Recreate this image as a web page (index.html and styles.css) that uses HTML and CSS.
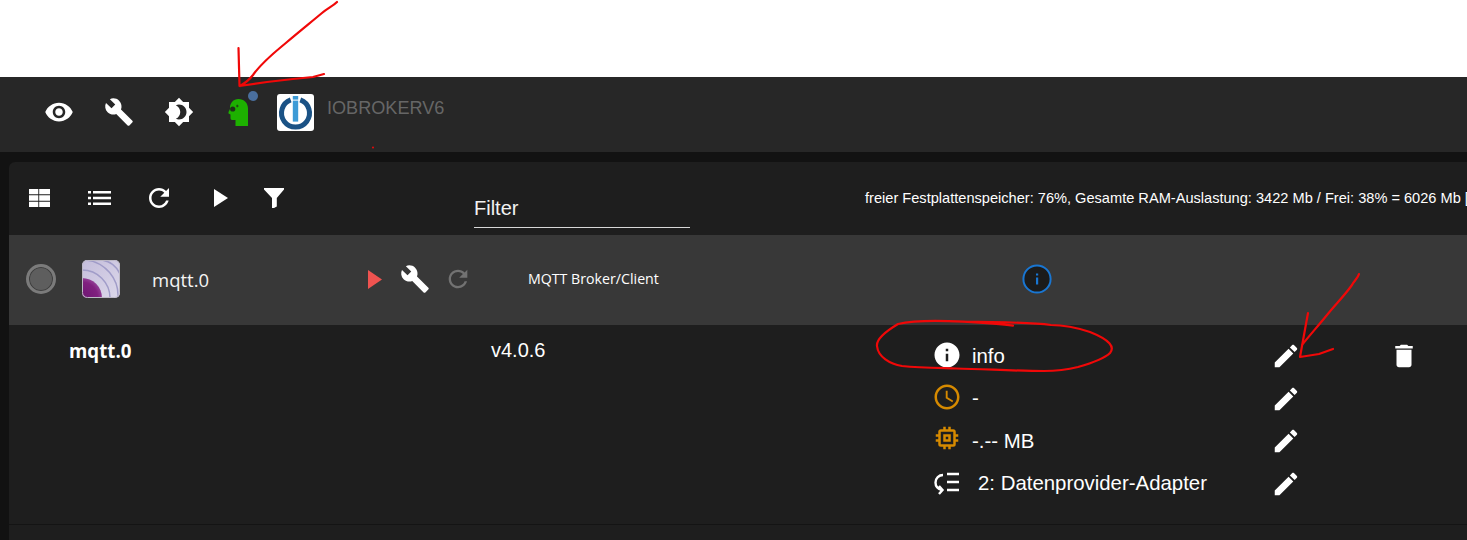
FILE: index.html
```html
<!DOCTYPE html>
<html lang="de">
<head>
<meta charset="utf-8">
<title>ioBroker Instanzen</title>
<link rel="stylesheet" href="styles.css">
</head>
<body>
<div class="blank"></div>
<header class="appbar">
  <span class="app-btn"><svg class="i30" viewBox="0 0 24 24"><path d="M12 4.5C7 4.5 2.73 7.61 1 12c1.73 4.39 6 7.5 11 7.5s9.27-3.11 11-7.5c-1.73-4.39-6-7.5-11-7.5zM12 17c-2.76 0-5-2.24-5-5s2.24-5 5-5 5 2.24 5 5-2.24 5-5 5zm0-8c-1.66 0-3 1.34-3 3s1.34 3 3 3 3-1.34 3-3-1.34-3-3-3z"/></svg></span>
  <span class="app-btn"><svg class="i30" viewBox="0 0 24 24"><path d="M22.7 19l-9.1-9.1c.9-2.3.4-5-1.5-6.9-2-2-5-2.4-7.4-1.3L9 6 6 9 1.6 4.7C.4 7.1.9 10.1 2.9 12.1c1.9 1.9 4.6 2.4 6.9 1.5l9.1 9.1c.4.4 1 .4 1.4 0l2.3-2.3c.5-.4.5-1.1.1-1.4z"/></svg></span>
  <span class="app-btn"><svg class="i30" viewBox="0 0 24 24"><path d="M20 8.69V4h-4.69L12 .69 8.69 4H4v4.69L.69 12 4 15.31V20h4.69L12 23.31 15.31 20H20v-4.69L23.31 12 20 8.69zM12 18c-.89 0-1.74-.2-2.5-.55C11.56 16.5 13 14.42 13 12s-1.44-4.5-3.5-5.45C10.26 6.2 11.11 6 12 6c3.31 0 6 2.69 6 6s-2.69 6-6 6z"/></svg></span>
  <span class="app-btn head-btn">
    <svg class="head" viewBox="0 0 20 27"><path class="head-fill" d="M10.500 0C16 0 20 4 20 9.500V27H7.500V21H4C3 21 2.500 20 2.500 19V15.500L.5 14.500V13L2 10C1.500 4 5.500 0 10.500 0Z"/><circle class="head-eye" cx="4.700" cy="10" r="2.600"/><path class="head-eye-line" d="M8 7h2.600M9.300 5.700v2.600"/></svg>
    <span class="badge"></span>
  </span>
  <svg class="logo" viewBox="0 0 37 37"><rect width="37" height="37" rx="3" fill="#fff"/><path d="M13.700 5.900A14 14 0 1 0 23.300 5.900" fill="none" stroke="#1a5285" stroke-width="5"/><rect x="15.800" y="2" width="5.400" height="3.600" fill="#3d9bd6"/><rect x="15.800" y="6.600" width="5.400" height="21" fill="#3d9bd6"/></svg>
  <span class="host">IOBROKERV6</span>
</header>
<main class="content">
  <section class="card">
    <div class="toolbar">
      <span class="tool"><svg class="table-icon" viewBox="0 0 21 18"><path d="M0 0h9.300v5.300H0zM10.200 0H21v5.300H10.200zM0 6.300h9.300v5.400H0zM10.200 6.300H21v5.400H10.200zM0 12.700h9.300V18H0zM10.200 12.700H21V18H10.200z"/></svg></span>
      <span class="tool"><svg class="list-icon" viewBox="0 0 23 14"><path d="M0 0h3v2.600H0zM5 0h18v2.600H5zM0 5.700h3v2.600H0zM5 5.700h18v2.600H5zM0 11.400h3V14H0zM5 11.400h18V14H5z"/></svg></span>
      <span class="tool"><svg class="i30" viewBox="0 0 24 24"><path d="M17.65 6.35C16.2 4.9 14.21 4 12 4c-4.42 0-7.99 3.58-7.99 8s3.57 8 7.99 8c3.73 0 6.84-2.55 7.73-6h-2.08c-.82 2.33-3.04 4-5.65 4-3.31 0-6-2.69-6-6s2.69-6 6-6c1.66 0 3.14.69 4.22 1.78L13 11h7V4l-2.35 2.35z"/></svg></span>
      <span class="tool tool-play"><svg class="play" viewBox="0 0 14 18"><path d="M0 0L14 9L0 18Z"/></svg></span>
      <span class="tool tool-narrow"><svg class="funnel" viewBox="0 0 20 20"><path d="M0 0H20V1.500L12.800 10V18.500L10 20H8V10L0 1.500Z"/></svg></span>
      <label class="filter">Filter</label>
      <span class="status">freier Festplattenspeicher: 76%, Gesamte RAM-Auslastung: 3422 Mb / Frei: 38% = 6026 Mb [</span>
    </div>
    <div class="instance">
      <span class="state"></span>
      <svg class="adapter" viewBox="0 0 38 38">
        <defs>
          <linearGradient id="bg" x1="0" y1="0" x2="1" y2="1"><stop offset="0" stop-color="#c4bddb"/><stop offset="1" stop-color="#dcd8ea"/></linearGradient>
          <radialGradient id="core" gradientUnits="userSpaceOnUse" cx="0" cy="38" r="21"><stop offset="0" stop-color="#6d1672"/><stop offset=".75" stop-color="#80207f"/><stop offset="1" stop-color="#96459a"/></radialGradient>
          <clipPath id="round"><rect width="38" height="38" rx="5"/></clipPath>
        </defs>
        <g clip-path="url(#round)">
          <rect width="38" height="38" fill="url(#bg)"/>
          <path d="M0 18A20 20 0 0 1 20 38H0Z" fill="url(#core)"/>
          <g fill="none" stroke="#a09cc8" stroke-width="1.500">
            <path d="M0 10A28 28 0 0 1 28 38"/>
            <path d="M4 0A36 36 0 0 1 36 38"/>
            <path d="M20 0A24 24 0 0 1 38 14"/>
          </g>
        </g>
        <rect x=".5" y=".5" width="37" height="37" rx="5" fill="none" stroke="#bdb9c6"/>
      </svg>
      <span class="name">mqtt.0</span>
      <svg class="run" viewBox="0 0 14 19"><path d="M0 0L14 9.500L0 19Z"/></svg>
      <svg class="i30 row-wrench" viewBox="0 0 24 24"><path d="M22.7 19l-9.1-9.1c.9-2.3.4-5-1.5-6.9-2-2-5-2.4-7.4-1.3L9 6 6 9 1.6 4.7C.4 7.1.9 10.1 2.9 12.1c1.9 1.9 4.6 2.4 6.9 1.5l9.1 9.1c.4.4 1 .4 1.4 0l2.3-2.3c.5-.4.5-1.1.1-1.4z"/></svg>
      <svg class="row-refresh" viewBox="0 0 24 24"><path d="M17.65 6.35C16.2 4.9 14.21 4 12 4c-4.42 0-7.99 3.58-7.99 8s3.57 8 7.99 8c3.73 0 6.84-2.55 7.73-6h-2.08c-.82 2.33-3.04 4-5.65 4-3.31 0-6-2.69-6-6s2.69-6 6-6c1.66 0 3.14.69 4.22 1.78L13 11h7V4l-2.35 2.35z"/></svg>
      <span class="title">MQTT Broker/Client</span>
      <svg class="row-info" viewBox="0 0 30 30"><circle cx="15" cy="15" r="13.600" fill="#1b1b1b" stroke="#1976d2" stroke-width="2"/><path d="M14 13.500h2.200v7H14zM14 9.500h2.200v2H14z" fill="#1976d2"/></svg>
    </div>
    <div class="details">
      <strong class="d-name">mqtt.0</strong>
      <span class="d-version">v4.0.6</span>
      <div class="props">
        <div class="prop">
          <svg class="i30 up-1" viewBox="0 0 24 24"><path d="M12 2C6.480 2 2 6.480 2 12s4.480 10 10 10 10-4.480 10-10S17.520 2 12 2zm1 15h-2v-6h2v6zm0-8h-2V7h2v2z"/></svg>
          <span class="p-text">info</span>
          <svg class="i30 edit" viewBox="0 0 24 24"><path d="M3 17.250V21h3.750L17.810 9.940l-3.750-3.750L3 17.250zM20.710 7.040c.39-.39.39-1.020 0-1.410l-2.340-2.340c-.39-.39-1.020-.39-1.410 0l-1.830 1.830 3.750 3.750 1.830-1.830z"/></svg>
        </div>
        <div class="prop">
          <svg class="i30 orange up-2" viewBox="0 0 24 24"><path d="M11.990 2C6.470 2 2 6.480 2 12s4.470 10 9.990 10C17.520 22 22 17.520 22 12S17.520 2 11.990 2zM12 20c-4.420 0-8-3.580-8-8s3.580-8 8-8 8 3.580 8 8-3.580 8-8 8zm.5-13H11v6l5.250 3.150.75-1.230-4.500-2.670z"/></svg>
          <span class="p-text">-</span>
          <svg class="i30 edit" viewBox="0 0 24 24"><path d="M3 17.250V21h3.750L17.810 9.940l-3.750-3.750L3 17.250zM20.710 7.040c.39-.39.39-1.020 0-1.410l-2.340-2.340c-.39-.39-1.020-.39-1.410 0l-1.830 1.830 3.750 3.750 1.830-1.830z"/></svg>
        </div>
        <div class="prop">
          <svg class="i30 orange up-3" viewBox="0 0 24 24"><path d="M17 17H7V7h10m4 4V9h-2V7a2 2 0 0 0-2-2h-2V3h-2v2h-2V3H9v2H7c-1.110 0-2 .89-2 2v2H3v2h2v2H3v2h2v2a2 2 0 0 0 2 2h2v2h2v-2h2v2h2v-2h2a2 2 0 0 0 2-2v-2h2v-2h-2v-2m-6 2h-2v-2h2m2-2H9v6h6V9z"/></svg>
          <span class="p-text">-.-- MB</span>
          <svg class="i30 edit" viewBox="0 0 24 24"><path d="M3 17.250V21h3.750L17.810 9.940l-3.750-3.750L3 17.250zM20.710 7.040c.39-.39.39-1.020 0-1.410l-2.340-2.340c-.39-.39-1.020-.39-1.410 0l-1.830 1.830 3.750 3.750 1.830-1.830z"/></svg>
        </div>
        <div class="prop">
          <svg class="i30 outline up-1" viewBox="0 0 30 30"><path d="M11 7C7 7 3.500 10 3.500 14.500C3.500 18 6 21 10 22M7 18L10.500 22L7 26"/><path d="M15 6H27M15 14H27M15 22H27"/></svg>
          <span class="p-text p-wide">2: Datenprovider-Adapter</span>
          <svg class="i30 edit" viewBox="0 0 24 24"><path d="M3 17.250V21h3.750L17.810 9.940l-3.750-3.750L3 17.250zM20.710 7.040c.39-.39.39-1.020 0-1.410l-2.340-2.340c-.39-.39-1.020-.39-1.410 0l-1.830 1.830 3.750 3.750 1.830-1.830z"/></svg>
        </div>
      </div>
      <svg class="i30 trash" viewBox="0 0 24 24"><path d="M6 19c0 1.100.9 2 2 2h8c1.100 0 2-.9 2-2V7H6v12zM19 4h-3.500l-1-1h-5l-1 1H5v2h14V4z"/></svg>
    </div>
    <div class="rest"></div>
  </section>
</main>
<svg class="ink" viewBox="0 0 1467 540">
  <path d="M337 2C333 6 328 8 322 13C310 23 300 31 287 42C275 52 262 62 253 75C250 79 245 83 240 86M238.500 48L239.500 86L267 82L293 79L313 77L324 74"/>
  <path d="M1013 325.700C1000 324 985 323 963 321.700C940 320.500 915 320 898 324C888 330 876 338 877 346C878 357 890 364 902 366C920 368 940 368 956 368.500C985 369 1015 371 1044 371C1060 371 1070 369 1078 367C1092 363 1105 358 1110 353C1115 347 1110 340 1090 332C1075 327 1060 325 1051 325C1035 323 1010 322 963 321.700"/>
  <path d="M1359 274C1358 278 1354 281 1352 285C1345 295 1335 305 1327 315C1318 326 1310 335 1302 345M1308 313L1300 357L1319 354L1333 349"/>
  <circle class="ink-dot" cx="373" cy="147.500" r="1"/>
</svg>
</body>
</html>
```
FILE: styles.css
```css
* { box-sizing: border-box; }
html, body { margin: 0; height: 540px; overflow: hidden; }
body { background: #121212; color: #fff; font-family: "Liberation Sans", Arial, sans-serif; position: relative; }
svg { display: block; flex: none; fill: #fff; }
.blank { height: 77px; background: #fff; }
.appbar { height: 75px; background: #272727; display: flex; align-items: center; padding: 0 0 5px 29px; }
.app-btn { width: 60px; height: 40px; display: flex; align-items: center; justify-content: center; position: relative; flex: none; }
.i30 { width: 30px; height: 30px; }
.head-btn { width: 58px; }
.head { width: 20px; height: 27px; }
.head-fill { fill: #1db100; }
.head-eye { fill: #1e3018; }
.head-eye-line { fill: none; stroke: #1e3018; stroke-width: .8; }
.badge { position: absolute; top: -1px; right: 9px; width: 10px; height: 10px; border-radius: 50%; background: #4a6f9e; }
.logo { width: 37px; height: 37px; margin-left: 10px; }
.host { margin-left: 13px; font-size: 18.100px; color: #666; margin-bottom: 8px; }
.content { padding: 10px 0 0 9px; }
.card { background: #1e1e1e; border-radius: 6px 0 0 0; height: 378px; display: flex; flex-direction: column; }
.toolbar { height: 73px; flex: none; display: flex; align-items: center; padding-bottom: 1px; white-space: nowrap; }
.tool { width: 60px; height: 32px; flex: none; display: flex; align-items: center; justify-content: center; }
.tool-play { width: 64px; }
.tool-narrow { width: 42px; }
.table-icon { width: 21px; height: 18px; }
.list-icon { width: 23px; height: 14px; }
.play { width: 14px; height: 18px; }
.funnel { width: 20px; height: 20px; }
.filter { margin-left: 179px; margin-top: 22px; width: 216px; height: 38px; flex: none; border-bottom: 1px solid #d8d8d8; font-size: 20px; line-height: 20px; padding-top: 8px; color: #f2f2f2; }
.status { margin-left: 175px; font-size: 14.600px; color: #fff; }
.instance { height: 90px; flex: none; background: #383838; display: flex; align-items: center; padding: 0 0 2px 17px; }
.state { width: 30px; height: 30px; flex: none; border-radius: 50%; border: 3px solid #7b7b7b; background: #5e5e5e; box-shadow: inset 0 0 0 1px #3f3f3f; }
.adapter { width: 38px; height: 38px; margin-left: 26px; }
.name { margin-left: 32px; width: 216px; flex: none; font-family: "Open Sans", sans-serif; font-size: 18.500px; color: #f4f4f4; }
.run { width: 14px; height: 19px; fill: #ef5350; }
.row-wrench { margin-left: 18px; }
.row-refresh { width: 28px; height: 28px; margin-left: 14px; fill: #727272; }
.title { margin-left: 56px; width: 494px; flex: none; font-size: 14.200px; font-family: "Open Sans", sans-serif; color: #fff; margin-bottom: 2px; }
.row-info { width: 30px; height: 30px; fill: none; }
.details { flex: none; height: 200px; border-bottom: 1px solid #141414; display: flex; align-items: flex-start; padding-left: 60px; font-size: 20.400px; }
.d-name { width: 422px; flex: none; margin-top: 13px; font-family: "Open Sans", sans-serif; font-size: 18.700px; }
.d-version { width: 441px; flex: none; margin-top: 14px; font-size: 20px; }
.props { width: 369px; flex: none; margin-top: 10px; }
.prop { height: 42.500px; display: flex; align-items: center; }
.up-1 { margin-bottom: 2px; }
.up-2 { margin-bottom: 4px; }
.up-3 { margin-bottom: 6px; }
.p-text { margin-left: 10px; width: 299px; flex: none; }
.p-wide { margin-left: 16px; width: 293px; }
.outline { fill: none; stroke: #fff; stroke-width: 2.400; }
.orange { fill: #d68a00; }
.trash { margin-left: 88px; margin-top: 16px; }
.rest { flex: 1; }
.ink { position: absolute; left: 0; top: 0; width: 1467px; height: 540px; fill: none; pointer-events: none; }
.ink path { fill: none; stroke: #f00808; stroke-width: 2.200; stroke-linejoin: round; stroke-linecap: round; }
.ink-dot { fill: #f00808; }
```
